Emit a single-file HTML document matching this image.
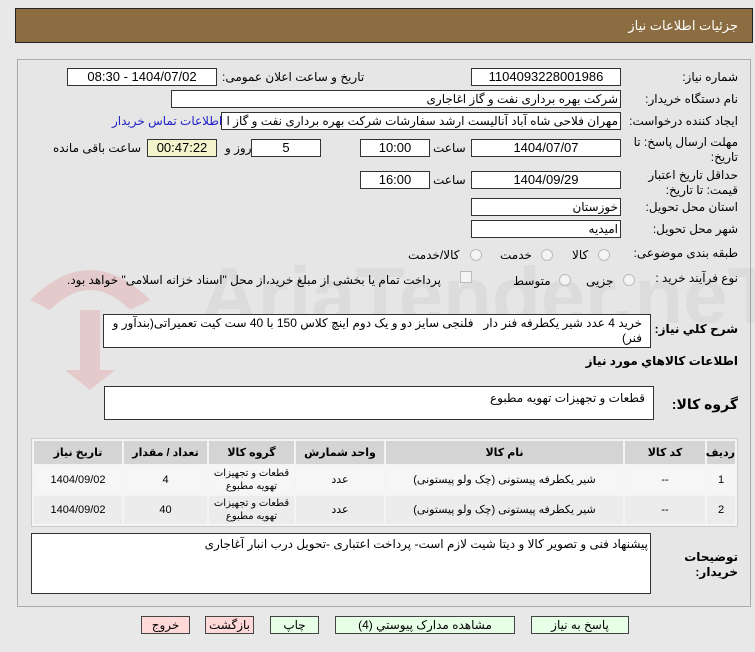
<!DOCTYPE html>
<html><head><meta charset="utf-8"><style>
*{box-sizing:border-box;margin:0;padding:0}
body{width:755px;height:652px;background:#e8e8e8;font-family:"Liberation Sans","DejaVu Sans",sans-serif;font-size:12px;color:#000;position:relative;overflow:hidden;direction:rtl}
.a{position:absolute;white-space:nowrap}
.box{position:absolute;background:#fff;border:1px solid #333;height:18px;line-height:16px;text-align:center;font-size:13px}
.lb{position:absolute;white-space:nowrap;font-size:12px}
.hdr{position:absolute;left:15px;top:8px;width:738px;height:35px;background:#8c6d42;border:1px solid #222}
.panel{position:absolute;left:17px;top:59px;width:734px;height:548px;border:1px solid #aaa;background:#e6e6e6}
.radio{position:absolute;width:12px;height:12px;border-radius:50%;border:1px solid #bbb;background:#f4f4f4}
table{position:absolute;left:31px;top:438px;width:707px;border-collapse:separate;border-spacing:2px;background:#f4f4f4;border:1px solid #ccc;table-layout:fixed}
th{background:#d4d4d4;height:23px;font-size:11px;font-weight:bold}
td{background:#f6f6f6;height:28px;text-align:center;font-size:11px;line-height:13px;overflow:hidden}
.btn{position:absolute;top:616px;height:18px;border:1px solid #444;text-align:center;line-height:16px;font-size:12px}
.g{background:#e6ffe6}.p{background:#ffd8d8}
</style></head><body>
<div class="hdr"><span class="a" style="right:14px;top:9px;color:#fff;font-size:13px">جزئیات اطلاعات نیاز</span></div>
<div class="panel"></div>
<svg class="a" style="left:20px;top:250px;opacity:.15" width="140" height="140" viewBox="0 0 140 140"><path d="M10 50 Q70 -10 130 50 L110 60 Q70 20 30 60 Z" fill="#d33"/><path d="M60 60 L80 60 L80 120 L95 120 L70 140 L45 120 L60 120Z" fill="#d33"/></svg>
<span class="a" style="left:200px;top:250px;font-size:80px;font-weight:bold;color:#000;opacity:.04;direction:ltr">AriaTender.neT</span>

<span class="lb" style="right:17px;top:70px">شماره نیاز:</span>
<div class="box" style="left:471px;top:68px;width:150px">1104093228001986</div>
<span class="lb" style="left:222px;top:70px">تاریخ و ساعت اعلان عمومی:</span>
<div class="box" style="left:67px;top:68px;width:150px">1404/07/02 - 08:30</div>

<span class="lb" style="right:17px;top:92px">نام دستگاه خریدار:</span>
<div class="box" style="left:171px;top:90px;width:450px;text-align:right;padding-right:2px;font-size:12px">شرکت بهره برداری نفت و گاز اغاجاری</div>

<span class="lb" style="right:17px;top:114px">ایجاد کننده درخواست:</span>
<div class="box" style="left:221px;top:112px;width:400px;text-align:right;padding-right:2px;font-size:12px;overflow:hidden">مهران فلاحی شاه آباد آنالیست ارشد سفارشات شرکت بهره برداری نفت و گاز ا</div>
<span class="lb" style="left:112px;top:114px;color:#22c">اطلاعات تماس خریدار</span>

<span class="lb" style="right:17px;top:135px;line-height:15px;text-align:right">مهلت ارسال پاسخ: تا<br>تاریخ:</span>
<div class="box" style="left:471px;top:139px;width:150px">1404/07/07</div>
<span class="lb" style="left:433px;top:141px">ساعت</span>
<div class="box" style="left:360px;top:139px;width:70px">10:00</div>
<div class="box" style="left:251px;top:139px;width:70px">5</div>
<span class="lb" style="left:225px;top:141px">روز و</span>
<div class="box" style="left:147px;top:139px;width:70px;background:#f4f4cc">00:47:22</div>
<span class="lb" style="left:53px;top:141px">ساعت باقی مانده</span>

<span class="lb" style="right:17px;top:168px;line-height:15px;text-align:right">حداقل تاریخ اعتبار<br>قیمت: تا تاریخ:</span>
<div class="box" style="left:471px;top:171px;width:150px">1404/09/29</div>
<span class="lb" style="left:433px;top:173px">ساعت</span>
<div class="box" style="left:360px;top:171px;width:70px">16:00</div>

<span class="lb" style="right:17px;top:200px">استان محل تحویل:</span>
<div class="box" style="left:471px;top:198px;width:150px;text-align:right;padding-right:2px;font-size:12px">خوزستان</div>
<span class="lb" style="right:17px;top:222px">شهر محل تحویل:</span>
<div class="box" style="left:471px;top:220px;width:150px;text-align:right;padding-right:2px;font-size:12px">امیدیه</div>

<span class="lb" style="right:17px;top:246px">طبقه بندی موضوعی:</span>
<div class="radio" style="left:598px;top:249px"></div><span class="lb" style="left:572px;top:248px">کالا</span>
<div class="radio" style="left:541px;top:249px"></div><span class="lb" style="left:500px;top:248px">خدمت</span>
<div class="radio" style="left:470px;top:249px"></div><span class="lb" style="left:408px;top:248px">کالا/خدمت</span>

<span class="lb" style="right:17px;top:271px">نوع فرآیند خرید :</span>
<div class="radio" style="left:623px;top:274px"></div><span class="lb" style="left:586px;top:274px">جزیی</span>
<div class="radio" style="left:559px;top:274px"></div><span class="lb" style="left:513px;top:274px">متوسط</span>
<div class="a" style="left:460px;top:271px;width:12px;height:12px;border:1px solid #bbb;background:#f4f4f4"></div>
<span class="lb" style="left:67px;top:273px;font-size:12px;letter-spacing:-.2px">پرداخت تمام یا بخشی از مبلغ خرید،از محل "اسناد خزانه اسلامی" خواهد بود.</span>

<span class="lb" style="right:17px;top:322px;font-weight:bold">شرح کلي نیاز:</span>
<div class="a" style="left:103px;top:314px;width:548px;height:34px;background:#fff;border:1px solid #333;white-space:normal;text-align:right;padding:1px 8px 0 2px;line-height:15px;font-size:12px">خرید 4 عدد شیر یکطرفه فنر دار &nbsp; فلنجی سایز دو و یک دوم اینچ کلاس 150 با 40 ست کیت تعمیراتی(بندآور و فنر)</div>
<span class="lb" style="right:17px;top:354px;font-weight:bold">اطلاعات کالاهاي مورد نیاز</span>
<span class="lb" style="right:17px;top:396px;font-weight:bold;font-size:14px">گروه کالا:</span>
<div class="a" style="left:104px;top:386px;width:550px;height:34px;background:#fff;border:1px solid #333;text-align:right;padding:4px 8px;font-size:12px">قطعات و تجهیزات تهویه مطبوع</div>

<table>
<colgroup><col style="width:28px"><col style="width:80px"><col style="width:237px"><col style="width:88px"><col style="width:85px"><col style="width:83px"><col></colgroup>
<tr><th>ردیف</th><th>کد کالا</th><th>نام کالا</th><th>واحد شمارش</th><th>گروه کالا</th><th>تعداد / مقدار</th><th>تاریخ نیاز</th></tr>
<tr><td>1</td><td>--</td><td>شیر یکطرفه پیستونی (چک ولو پیستونی)</td><td>عدد</td><td style="font-size:10px">قطعات و تجهیزات<br>تهویه مطبوع</td><td>4</td><td>1404/09/02</td></tr>
<tr><td style="background:#ececec">2</td><td style="background:#ececec">--</td><td style="background:#ececec">شیر یکطرفه پیستونی (چک ولو پیستونی)</td><td style="background:#ececec">عدد</td><td style="background:#ececec;font-size:10px">قطعات و تجهیزات<br>تهویه مطبوع</td><td style="background:#ececec">40</td><td style="background:#ececec">1404/09/02</td></tr>
</table>

<span class="lb" style="right:17px;top:550px;font-weight:bold;line-height:15px;text-align:right">توضیحات<br>خریدار:</span>
<div class="a" style="left:31px;top:533px;width:620px;height:61px;background:#fff;border:1px solid #333;text-align:right;padding:3px 2px;font-size:12px">پیشنهاد فنی و تصویر کالا و دیتا شیت لازم است- پرداخت اعتباری -تحویل درب انبار آغاجاری</div>

<div class="btn g" style="left:531px;width:98px">پاسخ به نیاز</div>
<div class="btn g" style="left:335px;width:180px">مشاهده مدارک پیوستي (4)</div>
<div class="btn g" style="left:270px;width:49px">چاپ</div>
<div class="btn p" style="left:205px;width:49px">بازگشت</div>
<div class="btn p" style="left:141px;width:49px">خروج</div>
</body></html>
